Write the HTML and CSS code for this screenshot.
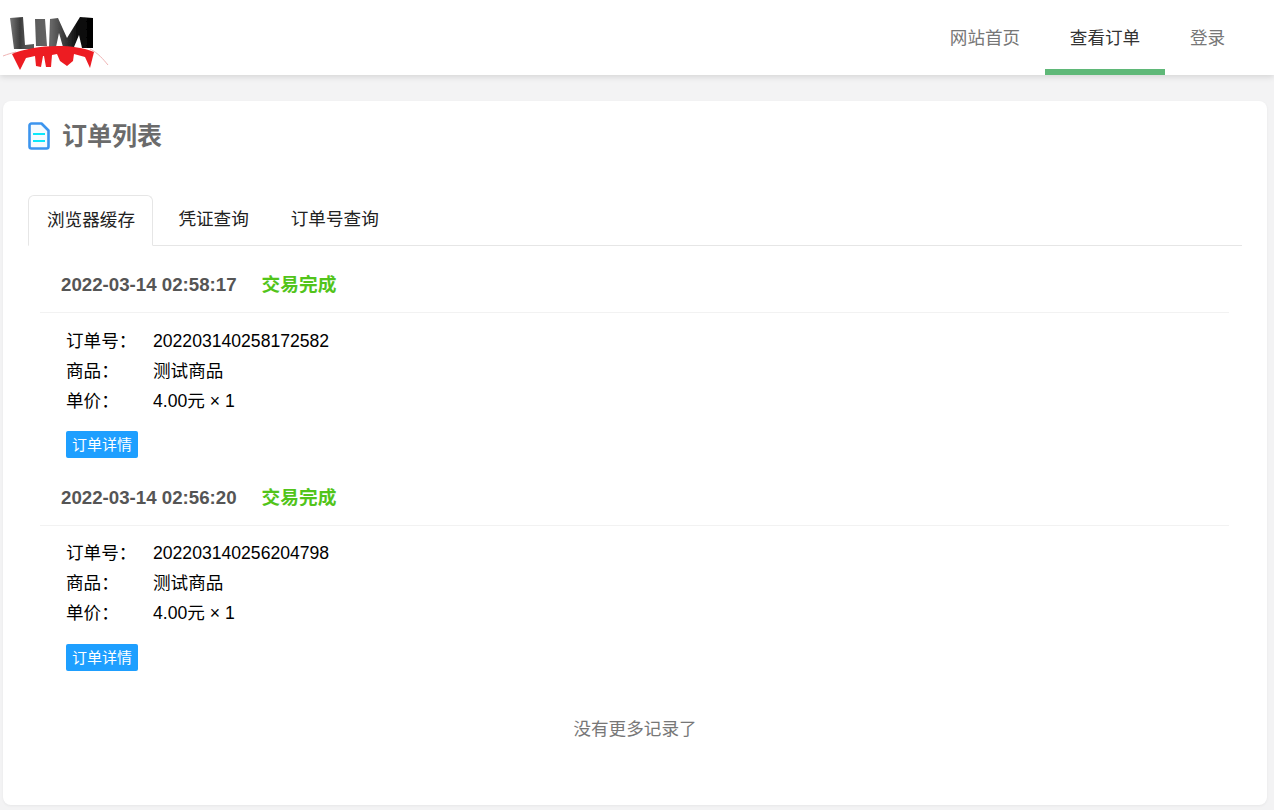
FILE: index.html
```html
<!DOCTYPE html>
<html lang="zh-CN">
<head>
    <meta charset="UTF-8">
    <title>订单列表</title>
    <link rel="stylesheet" href="styles.css">
</head>
<body>
    <header class="topbar">
        <a class="logo" href="#">
            <svg width="110" height="72" viewBox="0 0 110 72">
                <defs>
                    <linearGradient id="logo-dark" x1="0" y1="0" x2="1" y2="0">
                        <stop offset="0" stop-color="#777"/>
                        <stop offset="0.12" stop-color="#3c3c3c"/>
                        <stop offset="0.2" stop-color="#555"/>
                        <stop offset="0.5" stop-color="#666"/>
                        <stop offset="0.8" stop-color="#111"/>
                        <stop offset="1" stop-color="#000"/>
                    </linearGradient>
                    <filter id="logo-blur">
                        <feGaussianBlur stdDeviation="0.6"/>
                    </filter>
                </defs>
                <path fill="none" stroke="#f0b4b4" stroke-width="1" d="M3 56C8 54 12 53 16 52M90 49C98 53 103 59 108 65"/>
                <g filter="url(#logo-blur)">
                    <path fill="url(#logo-dark)" d="M10 18l13-1 2 28 9-1v5H14zM35 19h10l2 27H36zM50 19l8-1 9 20 13-21 13 1v30H82l-3-13-5 12H63l-4-14-3 14h-7z"/>
                    <path fill="#ed1c24" d="M12 54C30 46 70 42 94 52l-1 4-3 12-5-11-11-3-1 7-6 5-7-5-3-7-5 1-1 12h-5l-2-11h-1l-2 11-5-1-1-10-9 2-3 6-3 6z"/>
                </g>
            </svg>
        </a>
        <nav class="nav">
            <a class="nav-item" href="#">网站首页</a>
            <a class="nav-item active" href="#">查看订单</a>
            <a class="nav-item" href="#">登录</a>
        </nav>
    </header>

    <main class="card">
        <h1 class="card-title">
            <svg width="22" height="28" viewBox="0 0 22 28">
                <path fill="#f4fbff" stroke="#3b94ee" stroke-width="2.6" stroke-linejoin="round" d="M3.5 1.5H13.5L20.5 8.5V24.5a2 2 0 0 1-2 2H3.5a2 2 0 0 1-2-2V3.5a2 2 0 0 1 2-2z"/>
                <path stroke="#0ae8fa" stroke-width="2" d="M5 12h12M5 19h12"/>
            </svg>
            订单列表
        </h1>

        <div class="tabs">
            <div class="tab active">浏览器缓存</div>
            <div class="tab">凭证查询</div>
            <div class="tab">订单号查询</div>
        </div>

        <section class="order">
            <div class="order-head">
                <span class="order-time">2022-03-14 02:58:17</span>
                <span class="order-status">交易完成</span>
            </div>
            <dl class="order-info">
                <div class="info-row"><dt>订单号：</dt><dd>202203140258172582</dd></div>
                <div class="info-row"><dt>商品：</dt><dd>测试商品</dd></div>
                <div class="info-row"><dt>单价：</dt><dd>4.00元 × 1</dd></div>
            </dl>
            <a class="detail-btn" href="#">订单详情</a>
        </section>

        <section class="order">
            <div class="order-head">
                <span class="order-time">2022-03-14 02:56:20</span>
                <span class="order-status">交易完成</span>
            </div>
            <dl class="order-info">
                <div class="info-row"><dt>订单号：</dt><dd>202203140256204798</dd></div>
                <div class="info-row"><dt>商品：</dt><dd>测试商品</dd></div>
                <div class="info-row"><dt>单价：</dt><dd>4.00元 × 1</dd></div>
            </dl>
            <a class="detail-btn" href="#">订单详情</a>
        </section>

        <p class="no-more">没有更多记录了</p>
    </main>
</body>
</html>
```

FILE: styles.css
```css
* {
    margin: 0;
    padding: 0;
    box-sizing: border-box;
    font-family: "Liberation Sans", "Noto Sans CJK SC", sans-serif;
}

body {
    background-color: #f3f3f4;
    color: #000;
    font-size: 17.6px;
    height: 810px;
    overflow: hidden;
}

a {
    text-decoration: none;
}

.topbar {
    height: 75px;
    background-color: #fff;
    box-shadow: 0 2px 6px rgba(0, 0, 0, 0.12);
    display: flex;
    justify-content: space-between;
    padding-right: 24px;
}

.logo {
    display: block;
    height: 72px;
}

.nav {
    display: flex;
}

.nav-item {
    width: 120px;
    height: 75px;
    line-height: 76px;
    text-align: center;
    color: #777;
    border-bottom: 6px solid transparent;
}

.nav-item:last-child {
    width: 85px;
}

.nav-item.active {
    color: #333;
    border-bottom-color: #5fb878;
}

.card {
    height: 704px;
    margin: 26px 7px 0 3px;
    padding: 21px 25px 0;
    background-color: #fff;
    border-radius: 8px;
    box-shadow: 0 1px 3px rgba(0, 0, 0, 0.05);
}

.card-title {
    display: flex;
    align-items: flex-start;
    gap: 12px;
    height: 28px;
    line-height: 28px;
    font-size: 25px;
    font-weight: bold;
    color: #6b6b6b;
}

.tabs {
    display: flex;
    height: 51px;
    margin-top: 45px;
    border-bottom: 1px solid #e6e6e6;
}

.tab {
    height: 51px;
    padding: 0 25px;
    line-height: 49px;
    color: #222;
}

.tab:nth-child(2) {
    padding: 0 17px 0 25px;
}

.tab.active {
    padding: 0 17.4px 0 18px;
    background-color: #fff;
    border: 1px solid #e6e6e6;
    border-bottom-color: #fff;
    border-radius: 6px 6px 0 0;
}

.order {
    margin: 0 13px 0 12px;
    height: 212.7px;
}

.order-head {
    height: 67px;
    padding: 24px 21px 0;
    display: flex;
    align-items: baseline;
    gap: 25px;
    line-height: 30px;
    font-size: 18.7px;
    font-weight: bold;
    border-bottom: 1px solid #f2f2f2;
}

.order-time {
    color: #555;
}

.order-status {
    color: #52c41a;
}

.order-info {
    padding: 12.6px 26px 0;
}

.info-row {
    display: flex;
    height: 30px;
    line-height: 30px;
}

.info-row dt {
    width: 87px;
}

.detail-btn {
    display: inline-block;
    margin: 15.4px 0 0 26px;
    width: 72px;
    height: 27px;
    line-height: 27px;
    text-align: center;
    font-size: 15px;
    color: #fff;
    background-color: #1e9fff;
    border-radius: 2px;
}

.no-more {
    margin-top: 44px;
    text-align: center;
    color: #777;
}
```
